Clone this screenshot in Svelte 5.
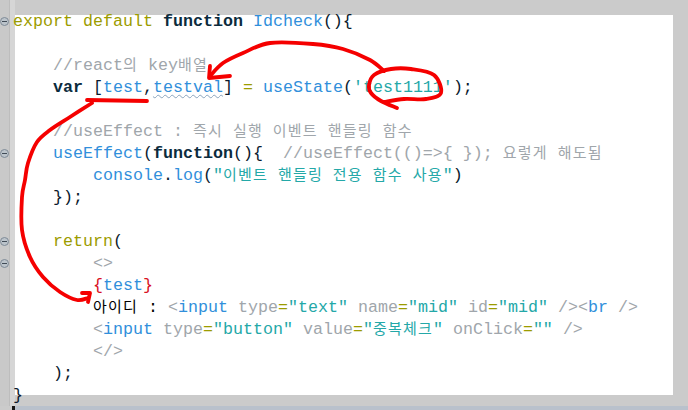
<script>
  const folds = [1, 7, 11, 12];

  // Smooth a hand-drawn stroke through its sampled points (Catmull-Rom to cubic Bézier).
  function stroke(points) {
    let d = `M${points[0][0]} ${points[0][1]}`;
    for (let i = 0; i < points.length - 1; i++) {
      const p0 = points[i - 1] ?? points[i];
      const p1 = points[i];
      const p2 = points[i + 1];
      const p3 = points[i + 2] ?? p2;
      const c1x = p1[0] + (p2[0] - p0[0]) / 6;
      const c1y = p1[1] + (p2[1] - p0[1]) / 6;
      const c2x = p2[0] - (p3[0] - p1[0]) / 6;
      const c2y = p2[1] - (p3[1] - p1[1]) / 6;
      d += `C${c1x.toFixed(1)} ${c1y.toFixed(1)} ${c2x.toFixed(1)} ${c2y.toFixed(1)} ${p2[0]} ${p2[1]}`;
    }
    return d;
  }

  const strokes = [
    // arrow from the circled value to "testval"
    [[384, 71], [370, 60], [343, 49], [313, 44], [270, 43], [243, 53], [223, 63], [210, 76]],
    // circle round 'test1111'
    [[397, 108], [381, 101], [371, 93], [369, 85], [374, 75], [391, 69], [411, 69], [434, 75], [441, 93], [426, 99], [404, 99], [384, 102]],
    // arrow from "test" down to {test}
    [[92, 103], [70, 117], [50, 130], [37, 142], [28, 163], [25, 180], [22, 197], [22, 230], [30, 257], [43, 277], [60, 292], [77, 300], [88, 298]]
  ].map(stroke);
</script>

<div class="page">
  <div class="viewport">
    <div class="gutter">
      {#each folds as row}
        <svg class="fold" style="grid-row: {row}" viewBox="0 0 9 9" width="9" height="9" aria-hidden="true">
          <circle cx="4.5" cy="4.5" r="4" fill="#bcc4cb" stroke="#7f8b96" stroke-width="1" />
          <path d="M2 4.5h5" stroke="#3f4a55" stroke-width="1" />
        </svg>
      {/each}
    </div>
    <div class="panel">
<pre class="code"><span class="kw">export default</span> <b>function</b> <span class="id">Idcheck</span><span class="p">()&#123;</span>

    <span class="c">//react<span class="k">의</span> key<span class="k">배열</span></span>
    <b>var</b> <span class="p">[</span><span class="id">test</span><span class="p">,</span><span class="id wavy">testval</span><span class="p">]</span> <span class="kw">=</span> <span class="id">useState</span><span class="p">(</span><span class="s">'test1111'</span><span class="p">);</span>

    <span class="c">//useEffect : <span class="k">즉시 실행 이벤트 핸들링 함수</span></span>
    <span class="id">useEffect</span><span class="p">(</span><b>function</b><span class="p">()&#123;</span>  <span class="c">//useEffect(()=&gt;&#123; &#125;); <span class="k">요렇게 해도됨</span></span>
        <span class="id">console</span><span class="p">.</span><span class="id">log</span><span class="p">(</span><span class="s">"<span class="k">이벤트 핸들링 전용 함수 사용</span>"</span><span class="p">)</span>
    <span class="p">&#125;);</span>

    <span class="kw">return</span><span class="p">(</span>
        <span class="c">&lt;&gt;</span>
        <span class="r">&#123;</span><span class="id">test</span><span class="r">&#125;</span>
        <span class="t"><span class="k">아이디</span> :</span> <span class="c">&lt;</span><span class="id">input</span> <span class="c">type</span><span class="kw">=</span><span class="s">"text"</span> <span class="c">name</span><span class="kw">=</span><span class="s">"mid"</span> <span class="c">id</span><span class="kw">=</span><span class="s">"mid"</span> <span class="c">/&gt;&lt;</span><span class="id">br</span> <span class="c">/&gt;</span>
        <span class="c">&lt;</span><span class="id">input</span> <span class="c">type</span><span class="kw">=</span><span class="s">"button"</span> <span class="c">value</span><span class="kw">=</span><span class="s">"<span class="k">중복체크</span>"</span> <span class="c">onClick</span><span class="kw">=</span><span class="s">""</span> <span class="c">/&gt;</span>
        <span class="c">&lt;/&gt;</span>
    <span class="p">);</span>
<span class="p">&#125;</span></pre>
    </div>
  </div>
  <div class="statusbar"><span class="nub"></span><span class="bar"></span></div>

  <svg class="ink" viewBox="0 0 688 410" width="688" height="410" aria-hidden="true">
    <g fill="none" stroke="#f50000" stroke-width="3.8" stroke-linecap="round" stroke-linejoin="round">
      {#each strokes as d}
        <path {d} />
      {/each}
      <path d="M210 66L209 78L230 76" />
      <path d="M87 100L147 101" />
      <path d="M82 293L90 293L88 302" />
    </g>
  </svg>
</div>

<style>
  :global(body) {
    margin: 0;
  }
  .page {
    position: relative;
    width: 688px;
    height: 410px;
    overflow: hidden;
    background: #cbcbcb;
  }
  .viewport {
    display: flex;
    height: 406px;
  }
  .gutter {
    box-sizing: border-box;
    flex: none;
    width: 15px;
    padding-top: 10px;
    display: grid;
    grid-template-rows: repeat(18, 22px);
    align-items: center;
    background: linear-gradient(to right, #c9c9c9 9px, #bdbdbd 9px, #bdbdbd 10px, #d6d6d6 10px);
  }
  .fold {
    grid-column: 1;
    margin-left: 0;
  }
  .panel {
    flex: none;
    width: 658px;
    height: 380px;
    margin-top: 15px;
    background: #fff;
  }
  .code {
    position: relative;
    margin: -4px 0 0 -2px;
    font-family: "Liberation Mono", "Noto Sans CJK KR", monospace;
    font-size: 16.67px;
    line-height: 22px;
    color: #0d2233;
  }
  .code b {
    color: #0b2b3d;
    font-weight: 700;
  }
  .kw {
    color: #9c9c00;
  }
  .id {
    color: #318fdb;
  }
  .p {
    color: #0a1a2e;
  }
  .c {
    color: #a0a6ab;
  }
  .s {
    color: #24a8a8;
  }
  .r {
    color: #d80f22;
  }
  .t {
    color: #000;
  }
  .k {
    font-family: "Noto Sans CJK KR", sans-serif;
    font-size: 15px;
    line-height: 1;
    letter-spacing: 1.2px;
    word-spacing: 5.4px;
  }
  .wavy {
    text-decoration: underline wavy #8aa4bd 1px;
    text-underline-offset: 2px;
  }
  .statusbar {
    display: flex;
    height: 4px;
  }
  .nub {
    flex: none;
    width: 3px;
    margin-left: 12px;
    background: #141414;
  }
  .bar {
    flex: 1;
    background: #b9c1cc;
  }
  .ink {
    position: absolute;
    inset: 0;
    pointer-events: none;
  }
</style>
